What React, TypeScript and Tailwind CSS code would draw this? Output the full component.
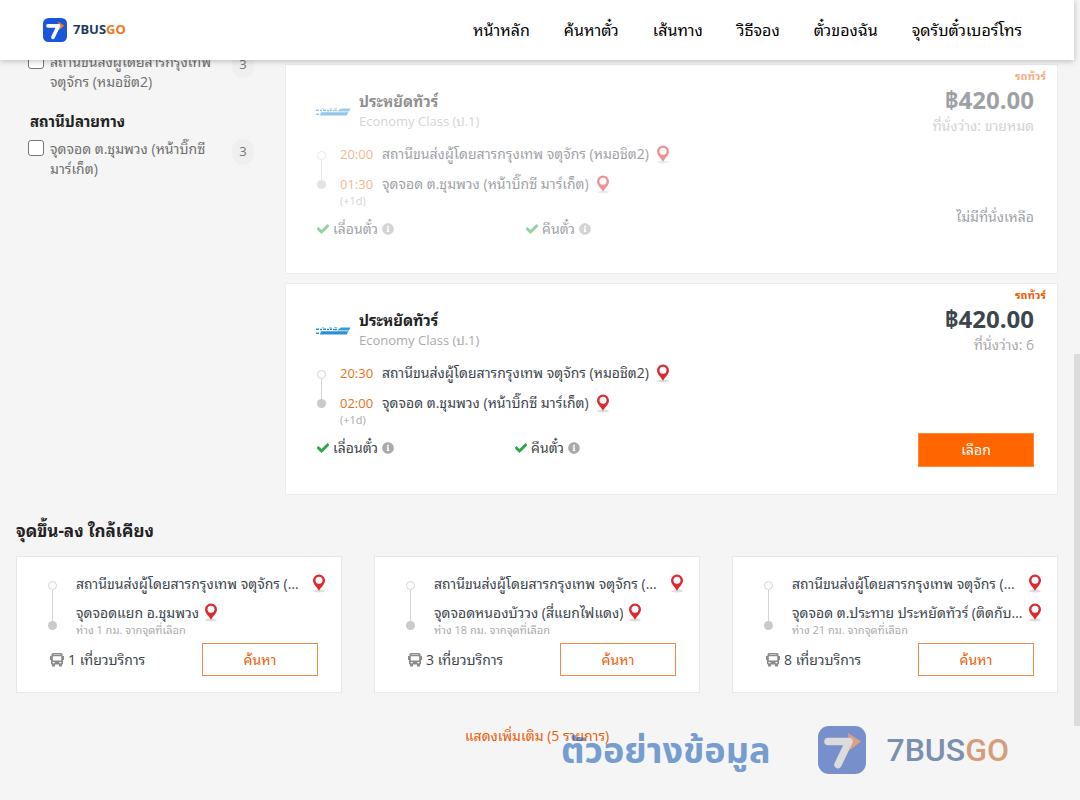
import React from "react";
import clsx from "clsx";
import { FaCheck, FaInfoCircle } from "react-icons/fa";

interface Trip {
  id: number;
  depart: string;
  arrive: string;
  seats: string;
  soldOut: boolean;
}

interface Nearby {
  stop: string;
  distance: number;
  trips: number;
}

const NAV_ITEMS = ["หน้าหลัก", "ค้นหาตั๋ว", "เส้นทาง", "วิธีจอง", "ตั๋วของฉัน", "จุดรับตั๋วเบอร์โทร"];

const ORIGIN = "สถานีขนส่งผู้โดยสารกรุงเทพ จตุจักร (หมอชิต2)";
const DESTINATION = "จุดจอด ต.ชุมพวง (หน้าบิ๊กซี มาร์เก็ต)";

const TRIPS: Trip[] = [
  { id: 1, depart: "20:00", arrive: "01:30", seats: "ขายหมด", soldOut: true },
  { id: 2, depart: "20:30", arrive: "02:00", seats: "6", soldOut: false },
];

const NEARBY: Nearby[] = [
  { stop: "จุดจอดแยก อ.ชุมพวง", distance: 1, trips: 1 },
  { stop: "จุดจอดหนองบัววง (สี่แยกไฟแดง)", distance: 18, trips: 3 },
  { stop: "จุดจอด ต.ประทาย ประหยัดทัวร์ (ติดกับธนาคาร)", distance: 21, trips: 8 },
];

interface LogoMarkProps {
  className?: string;
  fill: string;
  stroke: string;
  arrow: string;
}

function LogoMark({ className, fill, stroke, arrow }: LogoMarkProps) {
  return (
    <svg viewBox="0 0 48 48" className={className} aria-hidden="true">
      <rect width="48" height="48" rx="11" fill={fill} />
      <path d="M30 7L43 15.500L32 24Z" fill={arrow} />
      <path d="M10 15.500H31L20 38.500" fill="none" stroke={stroke} strokeWidth="7.500" strokeLinecap="round" strokeLinejoin="round" />
    </svg>
  );
}

function PinIcon() {
  return (
    <svg viewBox="0 0 14 19" className="h-[19px] w-[14px] shrink-0" aria-hidden="true">
      <ellipse cx="7" cy="17" rx="6" ry="1.500" fill="#dedede" />
      <path d="M7 17C5.700 13.500 1 10.500 1 6.500a6 6 0 0 1 12 0C13 10.500 8.300 13.500 7 17Z" fill="#dc2a30" />
      <circle cx="7" cy="6.300" r="3.500" fill="#fff" />
    </svg>
  );
}

function OperatorLogo() {
  return (
    <svg viewBox="0 0 36 10" className="h-[10px] w-9 shrink-0" aria-hidden="true">
      <path d="M26 2.500H35.500L34 5.500H22Z" fill="#3a9ad9" />
      <path d="M6 6.300H33.500L31.500 9.500H5Z" fill="#2a8fd4" />
      <path d="M1 4.300h3M5 4.500h2M8 4.300h3M12 4.500h2M15 4.300h2M18 4.500h4M1 8.300h3" stroke="#2a8fd4" strokeWidth="1.400" />
      <path d="M7 2.800h2M14 2.800h3M19 2.500h3" stroke="#5db2e4" strokeWidth="0.800" />
    </svg>
  );
}

function BusIcon() {
  return (
    <svg viewBox="0 0 14 14" className="h-[14px] w-[14px] shrink-0" fill="#8a8a8a" aria-hidden="true">
      <path fillRule="evenodd" d="M3 0h8q1.500 0 1.500 1.500V3H14v4h-1v3.500q0 1-1 1H2q-1 0-1-1V7H0V3h1.500V1.500Q1.500 0 3 0ZM3.500 1.200v.6h7v-.6ZM2.800 3.300v4.200h8.400V3.300ZM2.600 9v1.200h2V9ZM9.400 9v1.200h2V9Z" />
      <path d="M2 11h3v2.500H2ZM9 11h3v2.500H9Z" />
    </svg>
  );
}

function RouteLine() {
  return (
    <div className="flex w-[9px] shrink-0 flex-col items-center self-stretch">
      <span className="h-[9px] w-[9px] rounded-full border border-[#d5d5d5] bg-white" />
      <span className="w-px flex-1 bg-[#d5d5d5]" />
      <span className="h-[9px] w-[9px] rounded-full bg-[#cacaca]" />
    </div>
  );
}

function FilterOption({ id, label }: { id: string; label: string }) {
  return (
    <div className="flex items-start gap-[6px]">
      <input
        id={id}
        type="checkbox"
        className="mt-px h-4 w-4 shrink-0 appearance-none rounded-[3px] border border-[#767676] bg-white checked:bg-[#ff6600]"
      />
      <label htmlFor={id} className="w-[172px] text-sm leading-5 text-[#6f6f6f]">
        {label}
      </label>
      <span className="ml-1 flex h-[26px] w-[22px] items-center justify-center rounded-full bg-[#efefef] text-[13px] text-[#777]">3</span>
    </div>
  );
}

function Perk({ label }: { label: string }) {
  return (
    <span className="flex items-center gap-1 text-sm leading-5 text-[#3d464d]">
      <FaCheck size={12} stroke="currentColor" strokeWidth={30} className="text-[#28a745]" />
      {label}
      <FaInfoCircle size={12} className="text-[#aaa]" />
    </span>
  );
}

function TripCard({ trip }: { trip: Trip }) {
  return (
    <article className="border border-[#ececec] bg-white">
      <div className={clsx("flex justify-between pr-[23px] pl-[29px]", trip.soldOut ? "h-[208px] opacity-50" : "h-[210px]")}>
        <div>
          <div className="mt-[26px] flex items-center gap-2">
            <OperatorLogo />
            <div>
              <h3 className="text-[15px] leading-5 font-bold text-[#222]">ประหยัดทัวร์</h3>
              <p className="text-[13px] leading-5 text-[#aaa]">Economy Class (ป.1)</p>
            </div>
          </div>
          <div className="mt-2 flex pl-[2px]">
            <div className="flex pt-[12px] pb-[18px]">
              <RouteLine />
            </div>
            <div className="ml-[14px] text-sm">
              <div className="flex h-[30px] items-center gap-[7px]">
                <time className="w-[35px] text-[13px] text-[#e8701a]">{trip.depart}</time>
                <span className="text-[#3d464d]">{ORIGIN}</span>
                <PinIcon />
              </div>
              <div className="flex h-[30px] items-center gap-[7px]">
                <time className="w-[35px] text-[13px] text-[#e8701a]">{trip.arrive}</time>
                <span className="text-[#3d464d]">{DESTINATION}</span>
                <PinIcon />
              </div>
              <p className="-mt-1 text-[11px] leading-3 text-[#aaa]">(+1d)</p>
            </div>
          </div>
          <div className={clsx("mt-3 grid pl-[2px]", trip.soldOut ? "grid-cols-[209px_auto]" : "grid-cols-[198px_auto]")}>
            <Perk label="เลื่อนตั๋ว" />
            <Perk label="คืนตั๋ว" />
          </div>
        </div>
        <div className="flex flex-col items-end pt-[3px]">
          <span className="-mr-3 text-[11px] leading-4 font-bold text-[#e8600a]">รถทัวร์</span>
          <strong className="text-2xl leading-8 font-bold text-[#3d464d]">฿420.00</strong>
          <span className="text-sm leading-5 text-[#aaa]">ที่นั่งว่าง: {trip.seats}</span>
          {trip.soldOut ? (
            <span className="mt-[71px] text-sm leading-5 text-[#3d464d]">ไม่มีที่นั่งเหลือ</span>
          ) : (
            <button className="mt-[78px] h-[34px] w-[116px] border border-[#ff8833] bg-[#ff6600] text-sm text-white">เลือก</button>
          )}
        </div>
      </div>
    </article>
  );
}

function NearbyCard({ item }: { item: Nearby }) {
  return (
    <article className="h-[137px] min-w-0 border border-[#e6e9ea] bg-white pt-3 pr-[15px] pl-[31px]">
      <div className="flex">
        <div className="flex pt-[12px] pb-[6px]">
          <RouteLine />
        </div>
        <div className="ml-[19px] min-w-0 flex-1 text-sm text-[#3d464d]">
          <div className="flex h-[29px] items-center justify-between">
            <span className="w-[230px] truncate leading-7">{ORIGIN}</span>
            <PinIcon />
          </div>
          <div className="flex h-[29px] items-center gap-[5px]">
            <span className="truncate leading-7">{item.stop}</span>
            <PinIcon />
          </div>
          <p className="-mt-[3px] text-[11px] leading-3 text-[#aaa]">ห่าง {item.distance} กม. จากจุดที่เลือก</p>
        </div>
      </div>
      <div className="mt-[7px] flex items-center justify-between pr-2 pl-[2px]">
        <span className="flex items-center gap-1 text-sm text-[#3d464d]">
          <BusIcon />
          {item.trips} เที่ยวบริการ
        </span>
        <button className="h-[33px] w-[116px] border border-[#ec8c4a] bg-white text-sm text-[#e8600a]">ค้นหา</button>
      </div>
    </article>
  );
}

export default function App() {
  return (
    <div className="h-screen overflow-hidden bg-[#f5f5f5] font-['Open_Sans','Leelawadee_UI','Noto_Sans_Thai_Looped','Loma',sans-serif]">
      <header className="relative z-10 mr-[6px] flex h-[60px] items-center justify-between bg-white pr-[52px] pl-[43px] shadow-[0_1px_6px_rgba(0,0,0,0.25)]">
        <a href="#" className="flex items-center gap-[6px] font-['Noto_Sans'] text-[13px] font-bold text-[#1e3a5f]">
          <LogoMark className="h-6 w-6" fill="#1a56db" stroke="#fff" arrow="#f07820" />
          <span>
            7BUS<span className="text-[#f07820]">GO</span>
          </span>
        </a>
        <nav className="flex gap-[34px] text-base text-black">
          {NAV_ITEMS.map((item) => (
            <a key={item} href="#">
              {item}
            </a>
          ))}
        </nav>
      </header>

      <main className="-mt-2 pr-[22px] pl-4">
        <div className="flex">
          <aside className="w-[269px] shrink-0 pl-3">
            <FilterOption id="origin" label={ORIGIN} />
            <h2 className="mt-[19px] mb-2 pl-[2px] text-[15px] leading-5 font-bold text-[#222]">สถานีปลายทาง</h2>
            <FilterOption id="destination" label={DESTINATION} />
          </aside>
          <section className="mt-3 flex min-w-0 flex-1 flex-col gap-[9px]">
            {TRIPS.map((trip) => (
              <TripCard key={trip.id} trip={trip} />
            ))}
          </section>
        </div>

        <h2 className="mt-6 text-[17px] leading-6 font-bold text-[#222]">จุดขึ้น-ลง ใกล้เคียง</h2>
        <section className="mt-[13px] grid grid-cols-3 gap-8">
          {NEARBY.map((item) => (
            <NearbyCard key={item.stop} item={item} />
          ))}
        </section>
        <div className="mt-[30px] text-center">
          <a href="#" className="text-sm leading-5 text-[#e8600a]">
            แสดงเพิ่มเติม (5 รายการ)
          </a>
        </div>
      </main>

      {/* Sample data watermark */}
      <div className="pointer-events-none absolute right-[71px] bottom-[26px] flex items-center opacity-60">
        <span className="mr-12 font-['Noto_Sans','Noto_Sans_Thai','Open_Sans',sans-serif] text-[36px] leading-[48px] font-bold text-[#2264b8]">ตัวอย่างข้อมูล</span>
        <LogoMark className="mr-5 h-12 w-12" fill="#254eb2" stroke="#cbcbcb" arrow="#cb6a38" />
        <span className="font-[Roboto] text-[32px] leading-[48px] font-medium text-[#2b4c85]">
          7BUS<span className="text-[#c06528]">GO</span>
        </span>
      </div>

      {/* Scroll thumb */}
      <div className="absolute top-[354px] right-0 h-[372px] w-[6px] bg-[#dcdcdc]" />
    </div>
  );
}
